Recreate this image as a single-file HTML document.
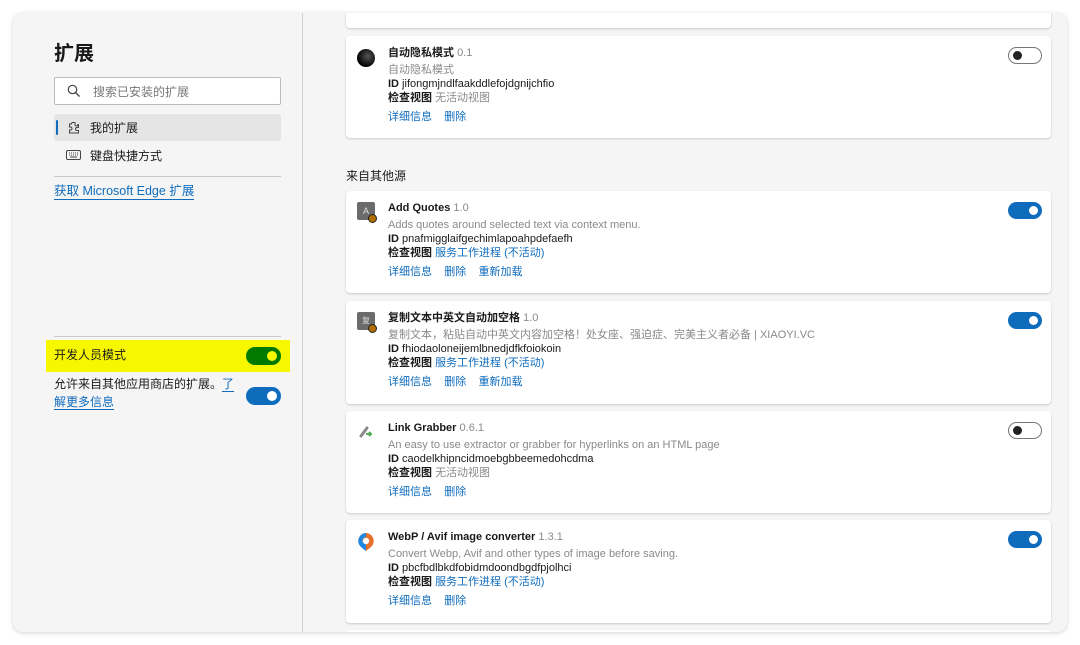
<!DOCTYPE html>
<html><head><meta charset="utf-8"><style>
*{margin:0;padding:0;box-sizing:border-box}
body{width:1080px;height:645px;background:#fff;font-family:"Liberation Sans","Noto Sans CJK SC",sans-serif;position:relative;overflow:hidden;color:#1a1a1a}
.panel{position:absolute;left:13px;top:13px;width:1054px;height:619px;background:#f5f5f5;border-radius:10px;box-shadow:0 1px 5px rgba(0,0,0,.18);overflow:hidden}
.div{position:absolute;left:289px;top:0;width:1px;height:619px;background:#d0d0d0}
.abs{position:absolute}
.card{position:absolute;left:333px;width:705px;background:#fff;border-radius:4px;box-shadow:0 1px 2px rgba(0,0,0,.18)}
.t{position:absolute;left:42px;font-size:11px;white-space:nowrap;line-height:14px}
.b{font-weight:bold;color:#1a1a1a}
.g{color:#8a8a8a}
.l{color:#0f6cbd}
.tog{position:absolute;left:662px;top:11px;width:34px;height:17px;border-radius:9px;background:#0f6cbd}
.tog::after{content:"";position:absolute;right:4px;top:4px;width:9px;height:9px;border-radius:50%;background:#fff}
.off{background:#fff;border:1px solid #777}
.off::after{left:4px;right:auto;top:3px;background:#222}
</style></head><body>
<div class="panel">
<div class="abs" style="left:41px;top:24px;font-size:20px;font-weight:bold">扩展</div>
<div class="abs" style="left:41px;top:64px;width:227px;height:28px;border:1px solid #bbb;background:#fff;border-radius:2px">
<svg class="abs" style="left:12px;top:6px" width="14" height="14" viewBox="0 0 14 14"><circle cx="5.5" cy="5.5" r="4.2" fill="none" stroke="#444" stroke-width="1.2"/><path d="M8.5 8.5L12.5 12.5" stroke="#444" stroke-width="1.3"/></svg>
<span class="abs" style="left:38px;top:5px;font-size:12px;color:#777">搜索已安装的扩展</span></div>
<div class="abs" style="left:41px;top:101px;width:227px;height:27px;background:#e5e5e5;border-radius:3px"></div>
<div class="abs" style="left:43px;top:107px;width:2px;height:15px;background:#0f6cbd;border-radius:1px"></div>
<svg class="abs" style="left:54px;top:108px" width="13" height="13" viewBox="0 0 13 13"><path d="M5 1.5h3v2a1.5 1.5 0 0 0 3 0v0h0.5v3h-1.5a1.5 1.5 0 0 0 0 3h1.5v2.5h-9v-3h1a1.5 1.5 0 0 0 0-3h-1v-3h2z" fill="none" stroke="#444" stroke-width="1"/></svg>
<span class="abs" style="left:77px;top:106px;font-size:12px">我的扩展</span>
<svg class="abs" style="left:53px;top:137px" width="15" height="10" viewBox="0 0 15 10"><rect x=".5" y=".5" width="14" height="9" rx="1.5" fill="none" stroke="#444"/><path d="M3 3h1M5 3h1M7 3h1M9 3h1M11 3h1M3 5h1M5 5h1M7 5h1M9 5h1M11 5h1M4 7h7" stroke="#444"/></svg>
<span class="abs" style="left:77px;top:134px;font-size:12px">键盘快捷方式</span>
<div class="abs" style="left:41px;top:163px;width:227px;height:1px;background:#c8c8c8"></div>
<span class="abs" style="left:41px;top:170px;font-size:12.5px;color:#0f6cbd;border-bottom:1px solid #0f6cbd;line-height:16px">获取 Microsoft Edge 扩展</span>
<div class="abs" style="left:41px;top:323px;width:227px;height:1px;background:#c8c8c8"></div>
<div class="abs" style="left:33px;top:327px;width:244px;height:32px;background:#f7f700"></div>
<span class="abs" style="left:41px;top:333px;font-size:12px">开发人员模式</span>
<div class="abs" style="left:233px;top:334px;width:35px;height:18px;border-radius:9px;background:#007a00"><div class="abs" style="right:4px;top:4px;width:10px;height:10px;border-radius:50%;background:#f7f700"></div></div>
<div class="abs" style="left:41px;top:362px;font-size:12px;line-height:18px;width:185px">允许来自其他应用商店的扩展。<span style="color:#0f6cbd;border-bottom:1px solid #0f6cbd">了</span><br><span style="color:#0f6cbd;border-bottom:1px solid #0f6cbd">解更多信息</span></div>
<div class="abs" style="left:233px;top:374px;width:35px;height:18px;border-radius:9px;background:#0f6cbd"><div class="abs" style="right:4px;top:4px;width:10px;height:10px;border-radius:50%;background:#fff"></div></div>
<div class="div"></div>

<div class="card" style="top:-10px;height:25px"></div>

<div class="card" style="top:23px;height:102px">
<div class="abs" style="left:11px;top:13px;width:18px;height:18px;border-radius:50%;background:radial-gradient(circle at 60% 40%,#555,#000 70%)"></div>
<div class="t" style="top:10px"><span class="b">自动隐私模式</span> <span class="g">0.1</span></div>
<div class="t g" style="top:27px">自动隐私模式</div>
<div class="t" style="top:41px"><b>ID</b> jifongmjndlfaakddlefojdgnijchfio</div>
<div class="t" style="top:55px"><b>检查视图</b> <span class="g">无活动视图</span></div>
<div class="t l" style="top:74px">详细信息&nbsp;&nbsp;&nbsp;&nbsp;删除</div>
<div class="tog off"></div></div>

<div class="abs" style="left:333px;top:154px;font-size:12px">来自其他源</div>

<div class="card" style="top:178px;height:102px">
<div class="abs" style="left:11px;top:11px;width:18px;height:18px;background:#6b6b6b;border-radius:2px;color:#ddd;font-size:9px;text-align:center;line-height:18px">A</div>
<div class="abs" style="left:22px;top:23px;width:9px;height:9px;border-radius:50%;background:#b06e00;border:1px solid #222"></div>
<div class="t" style="top:10px"><span class="b">Add Quotes</span> <span class="g">1.0</span></div>
<div class="t g" style="top:27px">Adds quotes around selected text via context menu.</div>
<div class="t" style="top:41px"><b>ID</b> pnafmigglaifgechimlapoahpdefaefh</div>
<div class="t" style="top:55px"><b>检查视图</b> <span class="l">服务工作进程 (不活动)</span></div>
<div class="t l" style="top:74px">详细信息&nbsp;&nbsp;&nbsp;&nbsp;删除&nbsp;&nbsp;&nbsp;&nbsp;重新加载</div>
<div class="tog"></div></div>

<div class="card" style="top:288px;height:103px">
<div class="abs" style="left:11px;top:11px;width:18px;height:18px;background:#6b6b6b;border-radius:2px;color:#ddd;font-size:8px;text-align:center;line-height:18px">复</div>
<div class="abs" style="left:22px;top:23px;width:9px;height:9px;border-radius:50%;background:#b06e00;border:1px solid #222"></div>
<div class="t" style="top:10px"><span class="b">复制文本中英文自动加空格</span> <span class="g">1.0</span></div>
<div class="t g" style="top:27px">复制文本，粘贴自动中英文内容加空格！处女座、强迫症、完美主义者必备 | XIAOYI.VC</div>
<div class="t" style="top:41px"><b>ID</b> fhiodaoloneijemlbnedjdfkfoiokoin</div>
<div class="t" style="top:55px"><b>检查视图</b> <span class="l">服务工作进程 (不活动)</span></div>
<div class="t l" style="top:74px">详细信息&nbsp;&nbsp;&nbsp;&nbsp;删除&nbsp;&nbsp;&nbsp;&nbsp;重新加载</div>
<div class="tog"></div></div>

<div class="card" style="top:398px;height:102px">
<svg class="abs" style="left:12px;top:12px" width="16" height="16" viewBox="0 0 16 16"><path d="M3 13L9 5" stroke="#888" stroke-width="3" stroke-linecap="round"/><path d="M8 11h5M11 9l2 2-2 2" stroke="#5a5" stroke-width="2" fill="none"/></svg>
<div class="t" style="top:10px"><span class="b">Link Grabber</span> <span class="g">0.6.1</span></div>
<div class="t g" style="top:27px">An easy to use extractor or grabber for hyperlinks on an HTML page</div>
<div class="t" style="top:41px"><b>ID</b> caodelkhipncidmoebgbbeemedohcdma</div>
<div class="t" style="top:55px"><b>检查视图</b> <span class="g">无活动视图</span></div>
<div class="t l" style="top:74px">详细信息&nbsp;&nbsp;&nbsp;&nbsp;删除</div>
<div class="tog off"></div></div>

<div class="card" style="top:507px;height:103px">
<svg class="abs" style="left:11px;top:12px" width="18" height="20" viewBox="0 0 18 20"><path d="M9 1a8 8 0 0 0-5 14l5 4 5-4A8 8 0 0 0 9 1z" fill="#e8702a"/><path d="M9 1a8 8 0 0 0-5 14l5 4V12a3 3 0 0 1 0-7z" fill="#1e88e5"/><circle cx="9" cy="9" r="3.2" fill="#fff"/></svg>
<div class="t" style="top:10px"><span class="b">WebP / Avif image converter</span> <span class="g">1.3.1</span></div>
<div class="t g" style="top:27px">Convert Webp, Avif and other types of image before saving.</div>
<div class="t" style="top:41px"><b>ID</b> pbcfbdlbkdfobidmdoondbgdfpjolhci</div>
<div class="t" style="top:55px"><b>检查视图</b> <span class="l">服务工作进程 (不活动)</span></div>
<div class="t l" style="top:74px">详细信息&nbsp;&nbsp;&nbsp;&nbsp;删除</div>
<div class="tog"></div></div>

<div class="card" style="top:617px;height:30px"></div>
</div>
</body></html>
